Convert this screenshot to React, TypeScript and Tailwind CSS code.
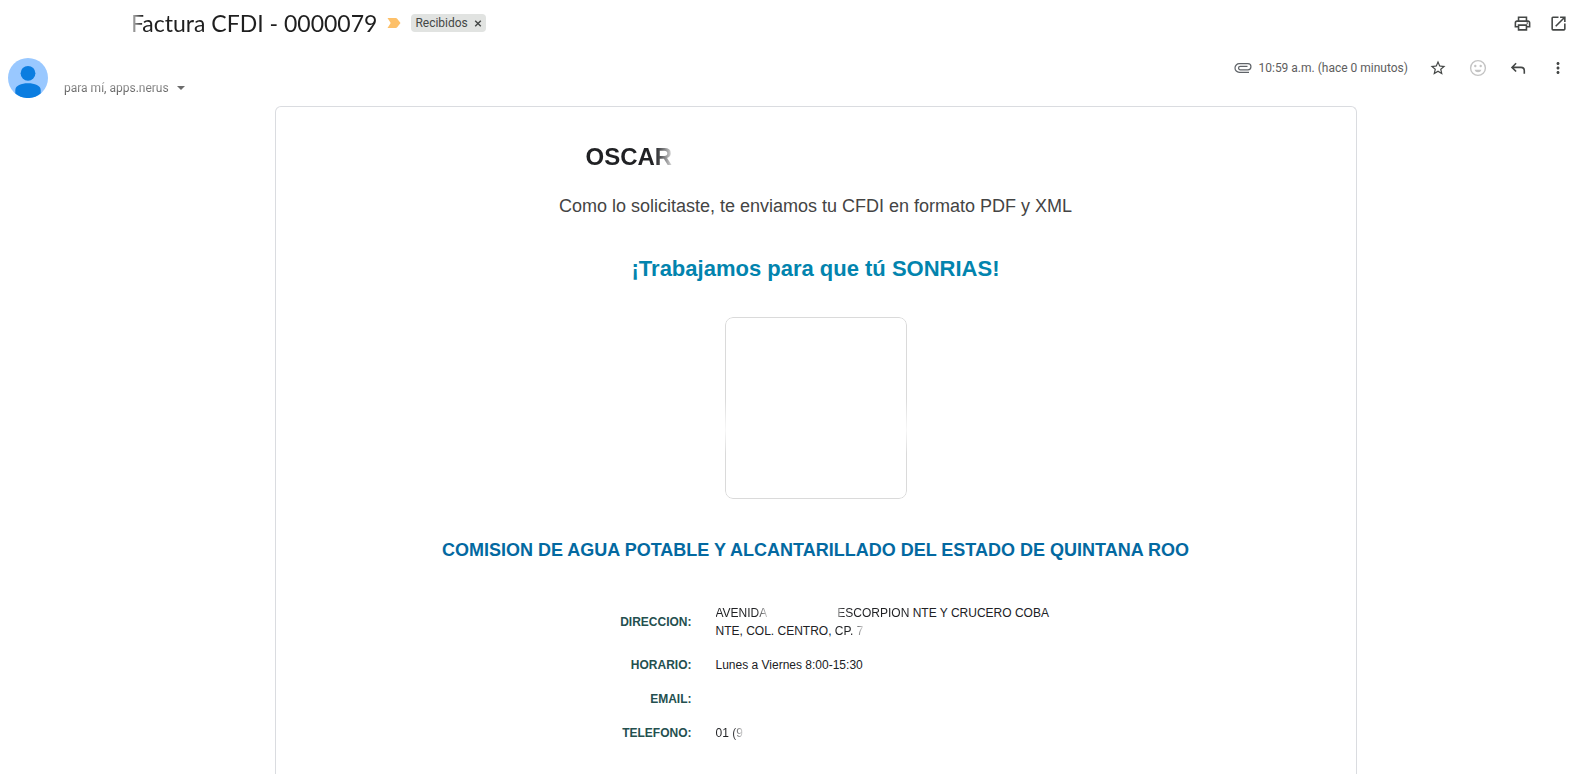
import { MdOutlinePrint, MdOpenInNew, MdStarBorder, MdMoreVert } from "react-icons/md";

function LabelMarker() {
  return (
    <svg viewBox="0 0 14 10" className="h-[10px] w-[14px]" aria-hidden="true">
      <path d="M0.5 0h8.300c.6 0 1 .2 1.400 .7L13.500 5l-3.300 4.300c-.4.500-.8.7-1.400.7H.5L3.700 5z" fill="#fdc069" />
    </svg>
  );
}

function Avatar() {
  return (
    <svg viewBox="0 0 40 40" className="size-10 shrink-0" aria-hidden="true">
      <circle cx="20" cy="20" r="20" fill="#99c8ff" />
      <circle cx="20" cy="15.300" r="7.400" fill="#0b7de0" />
      <path d="M7.300 35.500V32c0-4.500 6-6.800 12.700-6.800S32.700 27.500 32.700 32v3.500A20 20 0 0 1 7.300 35.500z" fill="#0b7de0" />
    </svg>
  );
}

function PaperClip() {
  return (
    <svg viewBox="0 0 18 10" className="h-[10px] w-[18px]" fill="none" stroke="#5f6368" strokeWidth="1.200" aria-hidden="true">
      <path d="M15 9.300H5.300a4.300 4.300 0 0 1 0-8.600h8.600a3.050 3.050 0 0 1 0 6.100H6.300a1.750 1.750 0 0 1 0-3.500h7.200" />
    </svg>
  );
}

function Smile() {
  return (
    <svg viewBox="0 0 20 20" className="size-5" aria-hidden="true">
      <circle cx="10" cy="10" r="7.400" fill="none" stroke="#c4c4c4" strokeWidth="1.400" />
      <circle cx="7.300" cy="8" r="1.200" fill="#c4c4c4" />
      <circle cx="12.700" cy="8" r="1.200" fill="#c4c4c4" />
      <path d="M6.500 11.700h7a3.700 3.700 0 0 1-7 0z" fill="#c4c4c4" />
    </svg>
  );
}

function Reply() {
  return (
    <svg viewBox="0 0 20 20" className="size-5" fill="none" stroke="#444746" strokeWidth="1.600" aria-hidden="true">
      <path d="M8.100 5.300 4 9.400l4.100 4.100M4 9.400h9a3.300 3.300 0 0 1 3.300 3.300v3" />
    </svg>
  );
}

const iconButton = "flex size-5 items-center justify-center text-[#444746]";
const labelCell = "w-[138px] px-3 py-2 text-right align-middle font-bold text-[#24504f]";
const valueCell = "px-3 py-2 text-left align-middle";

export default function App() {
  return (
    <main className="min-h-screen overflow-x-hidden bg-white font-['Liberation_Sans',Arial,sans-serif] text-[#202124]">
      <header className="flex h-[46px] items-center justify-between pr-[9px] pl-[131px]">
        <div className="flex items-center">
          <h1 className="bg-linear-to-r from-[#cccccc] to-[#1f1f1f] to-[12px] bg-clip-text font-[Lato,sans-serif] text-[23px] leading-7 whitespace-nowrap text-transparent">
            Factura CFDI - 0000079
          </h1>
          <span className="ml-[10px]"><LabelMarker /></span>
          <span className="ml-[10px] flex h-[18px] items-center gap-1.5 rounded bg-[#e1e3e1] px-1 font-[Roboto,sans-serif] text-xs text-[#444746]">
            Recibidos
            <button aria-label="Quitar etiqueta Recibidos">
              <svg viewBox="0 0 8 8" className="size-2" stroke="#444746" strokeWidth="1.400" aria-hidden="true">
                <path d="M1.200 1.700l5.600 5.600M6.800 1.700L1.200 7.300" />
              </svg>
            </button>
          </span>
        </div>
        <div className="flex gap-4">
          <button className={iconButton} aria-label="Imprimir"><MdOutlinePrint className="size-[19px]" /></button>
          <button className={iconButton} aria-label="Abrir en ventana nueva"><MdOpenInNew className="size-[19px]" /></button>
        </div>
      </header>

      <section className="flex h-[60px] items-start justify-between pt-3 pr-[9px] pl-2">
        <div className="flex">
          <Avatar />
          <button className="ml-4 flex h-5 items-center self-end font-[Roboto,sans-serif] text-xs">
            <span className="bg-linear-to-b from-[#c0c0c0] to-[#444444] bg-clip-text text-transparent">para mí, apps.nerus</span>
            <svg viewBox="0 0 8 4" className="ml-2 h-1 w-2" fill="#6b6b6b" aria-hidden="true"><path d="M0 0h8L4 4z" /></svg>
          </button>
        </div>
        <div className="flex h-5 items-center">
          <PaperClip />
          <time className="ml-1.5 font-[Roboto,sans-serif] text-xs text-[#5e5e5e]">10:59 a.m. (hace 0 minutos)</time>
          <div className="ml-5 flex gap-5">
            <button className={iconButton} aria-label="Destacar"><MdStarBorder className="size-[18px]" /></button>
            <button className={iconButton} aria-label="Reaccionar"><Smile /></button>
            <button className={iconButton} aria-label="Responder"><Reply /></button>
            <button className={iconButton} aria-label="Más opciones"><MdMoreVert className="size-[18px]" /></button>
          </div>
        </div>
      </section>

      <div className="pr-2.5 pl-16">
        <article className="mx-auto flex min-h-[668px] max-w-[1082px] flex-col items-center rounded-t-md border border-b-0 border-[#dadce0] px-6 pt-8">
          <h2 className="w-full max-w-[460px] text-2xl leading-9 font-bold">
            <span className="bg-linear-to-r from-[#202124] from-80% to-[#dddddd] bg-clip-text text-transparent">OSCAR</span>
          </h2>
          <p className="mt-[17px] text-lg leading-7 text-[#444444]">Como lo solicitaste, te enviamos tu CFDI en formato PDF y XML</p>
          <p className="mt-[33px] text-[22px] leading-8 font-bold text-[#0284ae]">¡Trabajamos para que tú SONRIAS!</p>
          <div className="mt-8 size-[182px] rounded-lg border border-[#dadada] mask-[linear-gradient(to_bottom,black_45%,#0003_62%,black_75%)]" />
          <h3 className="mt-[37px] text-lg leading-7 font-bold text-[#0369a1]">COMISION DE AGUA POTABLE Y ALCANTARILLADO DEL ESTADO DE QUINTANA ROO</h3>
          <table className="mt-8 w-full max-w-[500px] table-fixed border-collapse text-xs leading-[18px]">
            <tbody>
              <tr>
                <th scope="row" className={labelCell}>DIRECCION:</th>
                <td className={valueCell}>
                  <span className="mr-[70px] bg-linear-to-r from-[#202124] from-80% to-[#cccccc] bg-clip-text text-transparent">AVENIDA</span>
                  <span className="bg-linear-to-r from-[#aaaaaa] to-[#202124] to-10% bg-clip-text text-transparent">ESCORPION</span> NTE Y CRUCERO COBA NTE, COL. CENTRO,{" "}
                  <span className="bg-linear-to-r from-[#202124] from-65% to-[#dddddd] bg-clip-text text-transparent">CP. 7</span>
                </td>
              </tr>
              <tr>
                <th scope="row" className={labelCell}>HORARIO:</th>
                <td className={valueCell}>Lunes a Viernes 8:00-15:30</td>
              </tr>
              <tr>
                <th scope="row" className={labelCell}>EMAIL:</th>
                <td className={valueCell} />
              </tr>
              <tr>
                <th scope="row" className={labelCell}>TELEFONO:</th>
                <td className={valueCell}>
                  <span className="bg-linear-to-r from-[#202124] from-60% to-[#dddddd] bg-clip-text text-transparent">01 (9</span>
                </td>
              </tr>
            </tbody>
          </table>
        </article>
      </div>
    </main>
  );
}
